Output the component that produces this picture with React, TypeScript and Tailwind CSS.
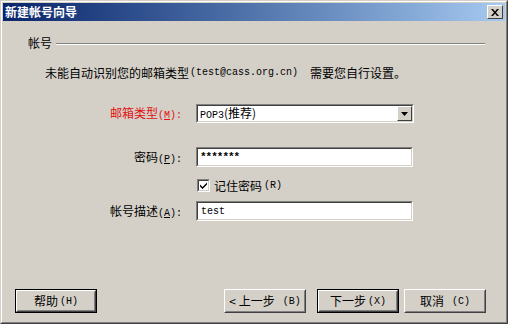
import React from "react";

const cjk = { fontFamily: '"Noto Sans CJK SC", "Liberation Sans", sans-serif' };
const mono = { fontFamily: '"Liberation Mono", "Noto Sans CJK SC", monospace' };

function Sunken({ children, className = "" }: { children?: React.ReactNode; className?: string }) {
    return (
        <div className={`border border-t-[#808080] border-l-[#808080] border-b-white border-r-white ${className}`}>
            <div className="h-full border border-t-[#404040] border-l-[#404040] border-b-[#d4d0c8] border-r-[#d4d0c8] bg-white flex items-center">
                {children}
            </div>
        </div>
    );
}

function Button({ label, hot, def }: { label: string; hot: string; def?: boolean }) {
    return (
        <div className={`h-[24px] w-[82px] ${def ? "border border-black" : ""}`}>
            <div className="h-full border border-t-white border-l-white border-b-[#404040] border-r-[#404040]">
                <div className="h-full border border-t-[#d4d0c8] border-l-[#d4d0c8] border-b-[#808080] border-r-[#808080] flex items-center justify-center text-[12px] text-black">
                    <span style={cjk}>{label}</span>
                    <span style={mono} className="text-[10px] ml-[2px] whitespace-pre">{hot}</span>
                </div>
            </div>
        </div>
    );
}

function Label({ cn, hot, red }: { cn: string; hot: string; red?: boolean }) {
    return (
        <div className={`w-[193px] text-right text-[12px] pr-[14px] ${red ? "text-[#e01010]" : "text-black"}`}>
            <span style={cjk}>{cn}</span>
            <span style={mono} className="text-[10px]">
                (<span className="underline">{hot}</span>):
            </span>
        </div>
    );
}

export default function App() {
    return (
        <div className="w-[508px] h-[324px] bg-[#d4d0c8] border border-t-[#d4d0c8] border-l-[#d4d0c8] border-b-[#404040] border-r-[#404040]">
            <div className="h-full border border-t-white border-l-white border-b-[#808080] border-r-[#808080] p-[1px] flex flex-col">
                {/* title bar */}
                <div className="h-[18px] flex items-center justify-between bg-gradient-to-r from-[#0a246a] to-[#a6caf0] pl-[2px] pr-[2px]">
                    <span style={cjk} className="text-white font-bold text-[12px] leading-none">
                        新建帐号向导
                    </span>
                    <div className="w-[16px] h-[14px] bg-[#d4d0c8] border border-t-white border-l-white border-b-[#404040] border-r-[#404040] flex items-center justify-center">
                        <svg width="8" height="7" viewBox="0 0 8 7">
                            <path d="M0 0h2l2 2.5L6 0h2L5 3.5 8 7H6L4 4.5 2 7H0l3-3.5z" fill="black" />
                        </svg>
                    </div>
                </div>

                {/* group heading */}
                <div className="flex items-center mt-[16px] pl-[25px] pr-[20px]">
                    <span style={cjk} className="text-[12px] text-black leading-[12px]">帐号</span>
                    <div className="flex-1 ml-[4px] mt-[2px]">
                        <div className="h-px bg-[#808080]" />
                        <div className="h-px bg-white" />
                    </div>
                </div>

                {/* message */}
                <div className="mt-[18px] pl-[42px] text-[12px] text-black leading-[12px] flex items-center">
                    <span style={cjk}>未能自动识别您的邮箱类型</span>
                    <span style={mono} className="text-[10px] ml-[1px]">(test@cass.org.cn)</span>
                    <span style={cjk} className="ml-[12px]">需要您自行设置。</span>
                </div>

                {/* mailbox type */}
                <div className="flex items-center mt-[25px]">
                    <Label cn="邮箱类型" hot="M" red />
                    <Sunken className="w-[218px] h-[19px]">
                        <span style={cjk} className="flex-1 pl-[2px] text-[12px] text-black leading-none">
                            <span style={mono} className="text-[10px]">POP3</span>(推荐)
                        </span>
                        <div className="w-[15px] h-full bg-[#d4d0c8] border border-t-white border-l-white border-b-[#404040] border-r-[#404040] flex items-center justify-center">
                            <svg width="7" height="4" viewBox="0 0 7 4">
                                <path d="M0 0h7L3.5 4z" fill="black" />
                            </svg>
                        </div>
                    </Sunken>
                </div>

                {/* password */}
                <div className="flex items-center mt-[24px]">
                    <Label cn="密码" hot="P" />
                    <Sunken className="w-[217px] h-[20px]">
                        <span style={mono} className="pl-[2px] text-[11px] text-black font-bold tracking-[-1px]">*******</span>
                    </Sunken>
                </div>

                {/* remember */}
                <div className="flex items-center mt-[11px] pl-[194px]">
                    <div className="w-[13px] h-[13px] border border-t-[#808080] border-l-[#808080] border-b-white border-r-white">
                        <div className="h-full border border-t-[#404040] border-l-[#404040] border-b-[#d4d0c8] border-r-[#d4d0c8] bg-white flex items-center justify-center">
                            <svg width="7" height="7" viewBox="0 0 7 7">
                                <path d="M0 2.5l2.5 2.5L7 0.5V2.5L2.5 7 0 4.5z" fill="black" />
                            </svg>
                        </div>
                    </div>
                    <span style={cjk} className="ml-[4px] text-[12px] text-black leading-none">记住密码</span>
                    <span style={mono} className="text-[10px] text-black ml-[2px]">(R)</span>
                </div>

                {/* description */}
                <div className="flex items-center mt-[8px]">
                    <Label cn="帐号描述" hot="A" />
                    <Sunken className="w-[217px] h-[20px]">
                        <span style={mono} className="pl-[3px] text-[10px] text-black">test</span>
                    </Sunken>
                </div>

                {/* buttons */}
                <div className="mt-auto mb-[8px] flex items-center pl-[12px] pr-[19px]">
                    <Button label="帮助" hot="(H)" def />
                    <div className="ml-auto flex gap-[5px]">
                        <Button label="< 上一步" hot=" (B)" />
                        <div className="ml-[6px]">
                            <Button label="下一步" hot="(X)" def />
                        </div>
                        <Button label="取消" hot=" (C)" />
                    </div>
                </div>
            </div>
        </div>
    );
}
